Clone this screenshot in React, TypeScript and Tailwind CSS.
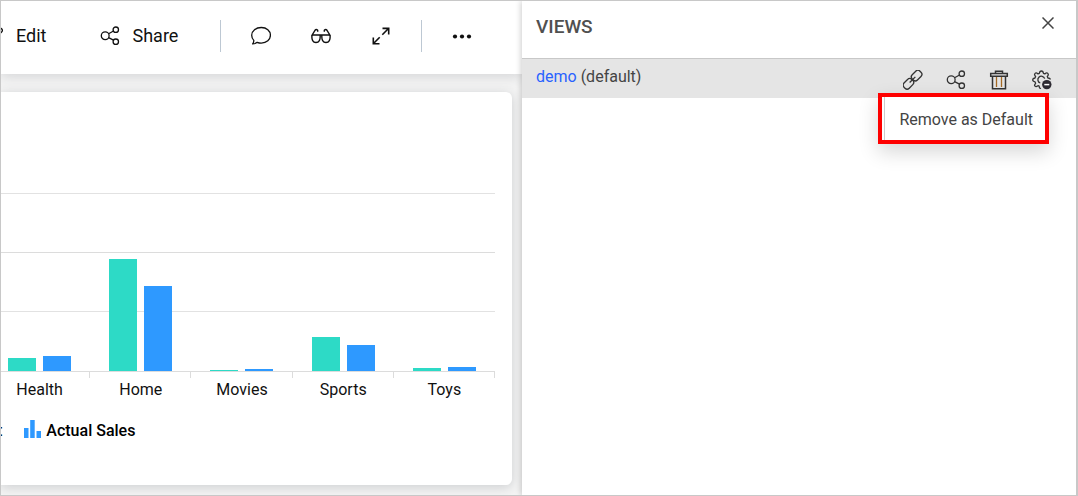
import React from "react";

const categories = [
  { name: "Health", target: 13, actual: 15 },
  { name: "Home", target: 112, actual: 85 },
  { name: "Movies", target: 1, actual: 2 },
  { name: "Sports", target: 34, actual: 26 },
  { name: "Toys", target: 3, actual: 4 },
];

type IconProps = { className?: string; children: React.ReactNode };

function Icon({ className = "size-5", children }: IconProps) {
  return (
    <svg
      viewBox="0 0 20 20"
      className={`shrink-0 ${className}`}
      fill="none"
      stroke="currentColor"
      strokeWidth="1.3"
      aria-hidden="true"
    >
      {children}
    </svg>
  );
}

function ShareIcon() {
  return (
    <Icon>
      <circle cx="5.2" cy="9.700" r="3.9" />
      <circle cx="15.800" cy="3.700" r="2.700" />
      <circle cx="15.800" cy="15.700" r="2.700" />
      <path d="M8.600 7.700 13.500 5M8.600 11.700l4.900 2.500" />
    </Icon>
  );
}

function Toolbar() {
  return (
    <header className="relative z-10 flex h-[73px] shrink-0 items-center bg-white pb-1 text-lg text-[#111] shadow-[0_2px_12px_rgba(40,50,60,0.17)]">
      <button type="button" className="-ml-[17px] flex items-center gap-3">
        <Icon>
          <path d="M3 17l1.400-5L14 2.200Q16 1 17.600 2.800T17.600 6L8 16z M12 4l4 4" />
        </Icon>
        Edit
      </button>
      <button type="button" className="ml-[54px] flex items-center gap-3">
        <ShareIcon />
        Share
      </button>
      <span className="ml-[42px] h-8 w-px bg-[#bdc8d3]" />
      <div className="mx-[30px] flex gap-10">
        <button type="button" aria-label="Comments">
          <Icon>
            <path
              d="M10.300 1.500C15.600 1.500 19.400 4.900 19.400 9.300s-3.800 7.800-9.100 7.800c-1.500 0-2.900-.3-4.100-.8-1 .9-2.500 1.600-4.600 1.600.9-.9 1.300-2.100 1.200-3.500C1.400 13 .7 11.400.7 9.300.7 4.900 5 1.500 10.300 1.500z"
              strokeLinejoin="round"
            />
          </Icon>
        </button>
        <button type="button" aria-label="View mode">
          <Icon>
            <path
              strokeWidth="1.400"
              strokeLinejoin="round"
              d="M.8 9.500 4 4.300Q5.200 2.800 6.700 4.300v1.500M19.200 9.500 16 4.300Q14.800 2.800 13.300 4.300v1.500M1.200 9h17.600M1 9.200c-.6 4.500 1 7.300 4 7.300s4.600-2.800 4.100-7.300M10.900 9.200c-.5 4.500 1.100 7.300 4.100 7.300s4.600-2.800 4-7.300"
            />
          </Icon>
        </button>
        <button type="button" aria-label="Full screen">
          <Icon>
            <path strokeWidth="1.600" d="M11.300 8.700 17.500 2.500M11.500 2.400h6.200v6.200M8.700 11.300l-6.200 6.200M2.300 11.500v6.200h6.200" />
          </Icon>
        </button>
      </div>
      <span className="h-8 w-px bg-[#bdc8d3]" />
      <button type="button" aria-label="More" className="ml-[30px]">
        <Icon>
          <g fill="currentColor" stroke="none">
            <circle cx="3" cy="10.500" r="2.100" />
            <circle cx="10" cy="10.500" r="2.100" />
            <circle cx="17" cy="10.500" r="2.100" />
          </g>
        </Icon>
      </button>
    </header>
  );
}

function Chart() {
  return (
    <section className="mt-[18px] mr-[10px] mb-[10px] flex flex-1 flex-col overflow-clip rounded-r-md bg-white pr-[17px] shadow-[0_2px_12px_rgba(40,50,60,0.2)]">
      <div className="-ml-3 mt-[101px]">
        <div className="relative">
          <div className="flex flex-col">
            <div className="h-[59px] border-t border-[#e2e2e2]" />
            <div className="h-[59px] border-t border-[#dcdcdc]" />
            <div className="h-[60px] border-t border-[#e2e2e2]" />
            <div className="border-t border-[#dcdcdc]" />
          </div>
          <div className="absolute inset-0 grid grid-cols-5 pb-px">
            {categories.map((c) => (
              <div key={c.name} className="flex items-end justify-center gap-[7px]">
                <div className="w-7 bg-[#2ddac6]" style={{ height: c.target }} />
                <div className="w-7 bg-[#2e99ff]" style={{ height: c.actual }} />
              </div>
            ))}
          </div>
        </div>
        <div className="grid grid-cols-5 text-center text-base text-[#111]">
          {categories.map((c) => (
            <div key={c.name}>
              <div className="h-1.5 border-r border-[#dcdcdc]" />
              <div className="leading-6">{c.name}</div>
            </div>
          ))}
        </div>
      </div>
      <div className="mt-[17px] flex items-center text-base font-medium text-black">
        <span className="-ml-1">t</span>
        <svg viewBox="0 0 17 18" className="mr-[5px] mb-1 ml-[22px] h-[18px] w-[17px]" fill="#2e99ff" aria-hidden="true">
          <path d="M0 8h4.500v10H0zM6.200 0h4.500v18H6.200zM12.500 11H17v7h-4.500z" />
        </svg>
        Actual Sales
      </div>
    </section>
  );
}

function RowActions() {
  return (
    <div className="flex gap-[23px] text-[#333]">
      <button type="button" aria-label="Copy link">
        <Icon>
          <g transform="rotate(-45 9.500 9.700)">
            <rect x="-1.800" y="6" width="11" height="7.400" rx="3" />
            <rect x="9.800" y="6" width="11" height="7.400" rx="3" />
            <path d="M5.500 9.700h8" />
          </g>
        </Icon>
      </button>
      <button type="button" aria-label="Share view">
        <ShareIcon />
      </button>
      <button type="button" aria-label="Delete view">
        <Icon>
          <path strokeWidth="1.500" d="M1.700 3.500h16.600v2.800H1.700zM6.500 3.300V1.200h7v2.100M3.500 6.300v12.400h13V6.300" />
          <path stroke="#a66a24" d="M7.500 7v10M12.500 7v10" />
        </Icon>
      </button>
      <button type="button" aria-label="Default settings">
        <Icon>
          <path
            strokeLinejoin="round"
            strokeLinecap="round"
            d="M8.500 18.300Q7.300 18.400 7.200 16.200L6 15.700Q3.600 17.400 2.700 15.800 2.200 15 3.600 13.300L3 11.800Q.6 11.500.7 9.700.7 8.300 3 8L3.600 6.500Q1.800 4.500 3.100 3.400 4.200 2.300 6 3.900L7.400 3.300Q7.600 1 9.400 1 11.200 1 11.400 3.300L12.800 3.900Q14.700 2.300 15.800 3.400 17 4.500 15.300 6.500L15.900 8Q18 8.100 18.200 9"
          />
          <path d="M12.700 8.600A3.500 3.500 0 1 0 8.300 13" />
          <circle cx="14.800" cy="14.600" r="4.700" fill="#2d2a32" stroke="none" />
          <path stroke="#fff" strokeWidth="1.500" d="M12.300 14.600h5" />
        </Icon>
      </button>
    </div>
  );
}

function ViewsPanel() {
  return (
    <aside className="relative z-20 bg-white shadow-[-1px_0_6px_rgba(0,0,0,0.2)]">
      <div className="flex h-[58px] items-start justify-between border-b border-[#c8c8c8] pt-3 pr-[22px] pl-[14px]">
        <h2 className="text-[19px] leading-7 font-medium text-[#505050]">VIEWS</h2>
        <button type="button" aria-label="Close" className="text-[#444]">
          <svg viewBox="0 0 12 12" className="mt-1 size-3" fill="none" stroke="currentColor" strokeWidth="1.500" aria-hidden="true">
            <path d="M.5.5l11 11M11.500.5l-11 11" />
          </svg>
        </button>
      </div>
      <div className="relative flex h-[39px] items-start justify-between bg-[#e5e5e5] pr-6 pl-[14px]">
        <p className="pt-1.5 text-base leading-6 text-[#444]">
          <a href="#demo" className="text-[#2962ff]">
            demo
          </a>{" "}
          (default)
        </p>
        <div className="pt-[11px]">
          <RowActions />
        </div>
        <div className="absolute top-[34px] right-[27px] border-4 border-[#fe0000] bg-white shadow-[0_8px_20px_rgba(0,0,0,0.16)]">
          <button type="button" className="ml-0.5 h-[43px] border-l border-[#ccc] pt-0.5 pr-3 pl-[14px] text-base whitespace-nowrap text-[#444]">
            Remove as Default
          </button>
        </div>
      </div>
    </aside>
  );
}

export default function App() {
  return (
    <div className="grid min-h-screen grid-cols-[521fr_554fr] overflow-hidden border border-r-2 border-[#c8c8c8] bg-[#f4f4f4] font-[Roboto,sans-serif]">
      <main className="flex min-w-0 flex-col">
        <Toolbar />
        <Chart />
      </main>
      <ViewsPanel />
    </div>
  );
}
